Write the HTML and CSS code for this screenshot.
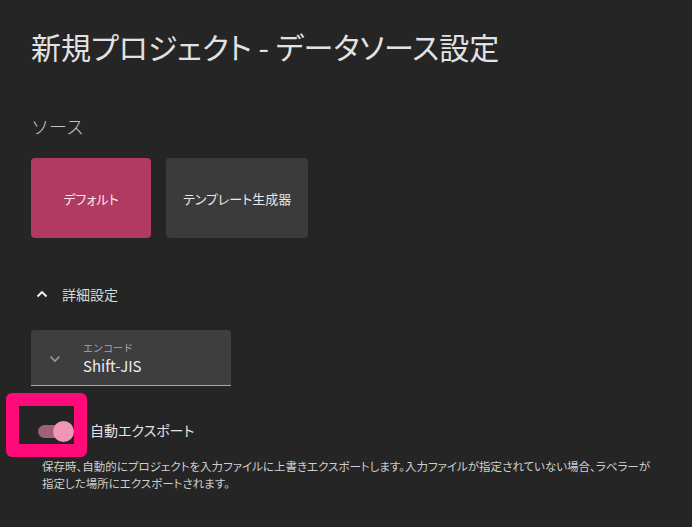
FILE: index.html
```html
<!doctype html>
<html>
    <head>
        <meta charset="utf-8">
        <title>新規プロジェクト - データソース設定</title>
        <link rel="stylesheet" href="styles.css">
    </head>
    <body>
        <h1 class="title">新規プロジェクト - データソース設定</h1>

        <div class="section-label">ソース</div>
        <div class="sources">
            <button class="source active">デフォルト</button>
            <button class="source">テンプレート生成器</button>
        </div>

        <div class="advanced">
            <svg class="chevron-up" width="12" height="8" viewBox="0 0 12 8">
                <path d="M1.5 6.5 L6 2 L10.5 6.5" fill="none" stroke="#fff" stroke-width="1.8"/>
            </svg>
            <span>詳細設定</span>
        </div>

        <div class="select">
            <svg class="chevron-down" width="12" height="8" viewBox="0 0 12 8">
                <path d="M1.5 1.5 L6 6 L10.5 1.5" fill="none" stroke="#9a9a9a" stroke-width="1.6"/>
            </svg>
            <div class="select-text">
                <div class="select-label">エンコード</div>
                <div class="select-value">Shift-JIS</div>
            </div>
        </div>

        <div class="toggle-row">
            <span class="highlight"></span>
            <span class="switch"><span class="knob"></span></span>
            <label>自動エクスポート</label>
        </div>
        <p class="hint">保存時、自動的にプロジェクトを入力ファイルに上書きエクスポートします。入力ファイルが指定されていない場合、ラベラーが指定した場所にエクスポートされます。</p>
    </body>
</html>
```

FILE: styles.css
```css
* {
    box-sizing: border-box;
}

body {
    margin: 0;
    padding: 0 31px;
    background: #252525;
    color: #e0e0e0;
    font-family: "Noto Sans CJK JP", "Noto Sans", sans-serif;
}

.title {
    margin: 0;
    padding-top: 22px;
    font-size: 30px;
    font-weight: normal;
    line-height: 48px;
    font-feature-settings: "palt";
    color: #e2e2e2;
}

.section-label {
    margin-top: 44px;
    font-size: 18px;
    line-height: 24px;
    color: #c4c4c4;
    font-weight: 300;
}

.sources {
    display: flex;
    gap: 15px;
    margin-top: 20px;
}

.source {
    height: 80px;
    padding: 0 17px;
    border: none;
    border-radius: 4px;
    background: #3b3b3b;
    color: #e8e8e8;
    font-family: inherit;
    font-size: 13px;
    font-feature-settings: "palt";
}

.source.active {
    width: 120px;
    background: #b03a62;
    color: #fbe6ee;
}

.advanced {
    display: flex;
    align-items: center;
    gap: 14px;
    margin-top: 46px;
    padding-left: 5px;
    font-size: 14px;
    line-height: 20px;
    color: #d8d8d8;
}

.select {
    display: flex;
    align-items: center;
    width: 200px;
    height: 56px;
    margin-top: 26px;
    background: #3e3e3e;
    border-radius: 4px 4px 0 0;
    border-bottom: 1px solid #a8a8a8;
}

.chevron-down {
    margin: 2px 22px 0 18px;
}

.select-text {
    padding-top: 2px;
}

.select-label {
    font-size: 10px;
    line-height: 14px;
    color: #a8a8a8;
}

.select-value {
    font-size: 15px;
    line-height: 22px;
    color: #ececec;
}

.toggle-row {
    position: relative;
    display: flex;
    align-items: center;
    height: 40px;
    margin-top: 25px;
    padding-left: 7px;
}

.highlight {
    position: absolute;
    left: -25px;
    top: -18px;
    width: 81px;
    height: 64px;
    border: 13px solid #ff0a78;
    border-radius: 6px;
}

.switch {
    position: relative;
    width: 30px;
    height: 13px;
    border-radius: 7px;
    background: #a0607a;
}

.knob {
    position: absolute;
    right: -6px;
    top: -4px;
    width: 21px;
    height: 21px;
    border-radius: 50%;
    background: #f095b5;
}

.toggle-row label {
    margin-left: 22px;
    margin-top: -3px;
    font-size: 14px;
    font-feature-settings: "palt";
    color: #e4e4e4;
}

.hint {
    margin: 7px 0 0 11px;
    width: 609px;
    font-size: 11.5px;
    line-height: 17px;
    color: #cfcfcf;
    font-feature-settings: "palt";
}
```
